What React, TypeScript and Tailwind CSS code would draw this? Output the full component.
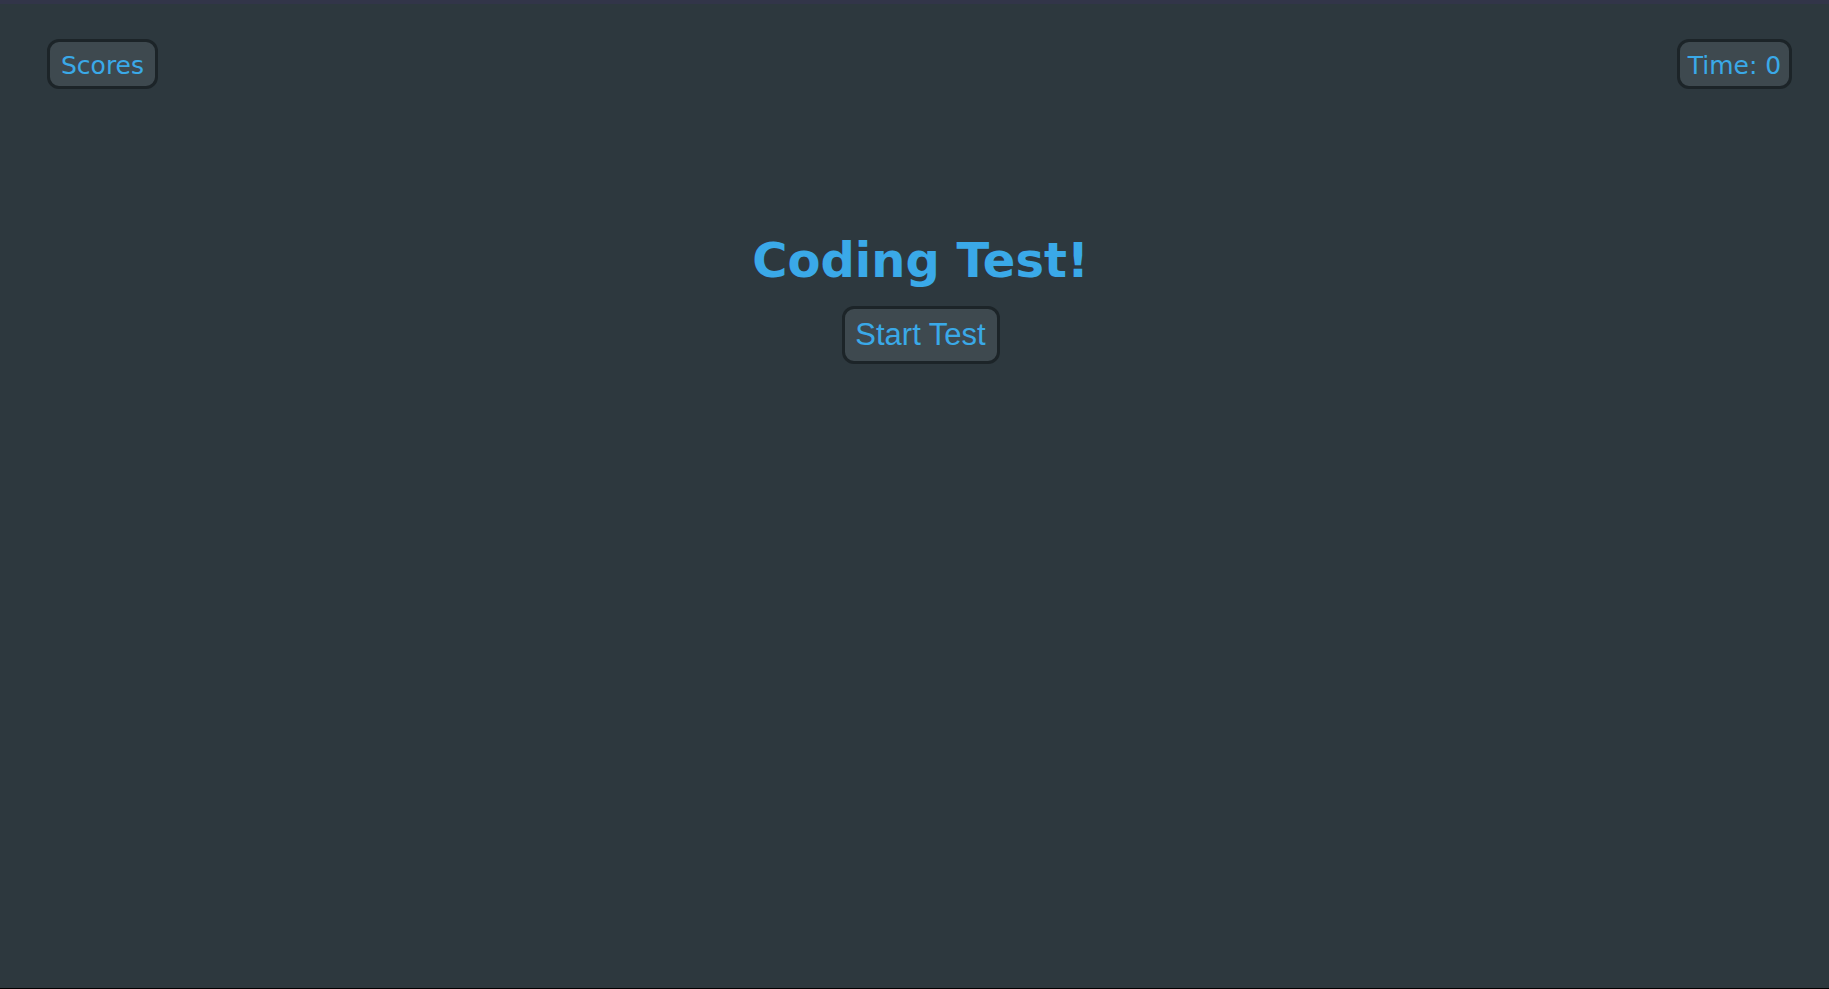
const App = () => {
      return (
            <div className="flex h-screen flex-col bg-[#2d383e]">
                  <div className="h-[4px] bg-[#323549]"></div>
                  <div className="flex flex-1 flex-col">
                        <div className="flex items-center justify-between pl-[47px] pr-[37px] pt-[35px]">
                              <button className="flex h-[50px] w-[111px] items-center justify-center rounded-[12px] border-[3px] border-[#1c2428] bg-[#3e494f] pt-[3px] text-[25px] text-[#3aa9e8] font-['DejaVu_Sans',sans-serif]">
                                    Scores
                              </button>
                              <button className="flex h-[50px] w-[115px] items-center justify-center rounded-[12px] border-[3px] border-[#1c2428] bg-[#3e494f] pt-[3px] text-[25px] text-[#3aa9e8] font-['DejaVu_Sans',sans-serif]">
                                    Time: 0
                              </button>
                        </div>
                        <div className="flex flex-col items-center pl-[12px] pt-[144px]">
                              <h1 className="h-[54px] text-[48px] leading-[54px] font-bold text-[#3aa9e8] font-['DejaVu_Sans',sans-serif]">
                                    Coding Test!
                              </h1>
                              <button className="mt-[19px] flex h-[58px] w-[158px] items-center justify-center rounded-[12px] border-[3px] border-[#1c2428] bg-[#3e494f] text-[31px] text-[#3aa9e8] font-['Liberation_Sans',Arial,sans-serif]">
                                    Start Test
                              </button>
                        </div>
                  </div>
                  <div className="h-[1px] bg-black"></div>
            </div>
      )
}

export default App;
